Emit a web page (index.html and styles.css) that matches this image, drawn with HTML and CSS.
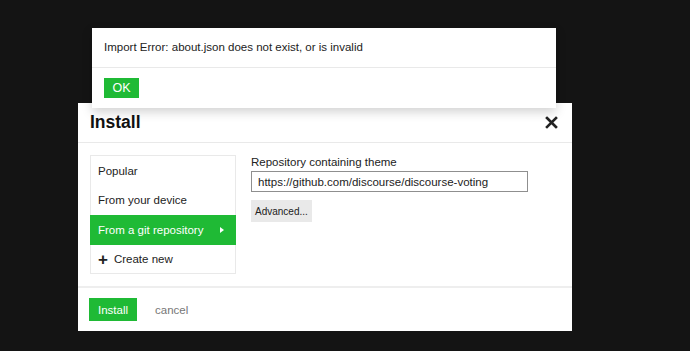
FILE: index.html
```html
<!DOCTYPE html>
<html lang="en">
<head>
    <meta charset="UTF-8">
    <title>Install theme</title>
    <link rel="stylesheet" href="styles.css">
</head>
<body>
    <div class="stage">
        <div class="alert">
            <div class="alert-body">Import Error: about.json does not exist, or is invalid</div>
            <div class="alert-footer">
                <button class="btn-primary btn-ok">OK</button>
            </div>
        </div>

        <div class="modal">
            <div class="modal-header">
                <h3>Install</h3>
                <svg class="close" width="13" height="13" viewBox="0 0 13 13">
                    <path d="M2 2 L11 11 M11 2 L2 11" stroke="#222" stroke-width="2.6" stroke-linecap="square"/>
                </svg>
            </div>
            <div class="modal-body">
                <ul class="install-options">
                    <li>Popular</li>
                    <li>From your device</li>
                    <li class="active">From a git repository <span class="caret"></span></li>
                    <li><span class="plus">+</span> Create new</li>
                </ul>
                <div class="repo-form">
                    <label for="repo-url">Repository containing theme</label>
                    <input type="text" id="repo-url" value="https://github.com/discourse/discourse-voting">
                    <button class="btn-default">Advanced...</button>
                </div>
            </div>
            <div class="modal-footer">
                <button class="btn-primary btn-install">Install</button>
                <a class="cancel" href="#">cancel</a>
            </div>
        </div>
    </div>
</body>
</html>
```

FILE: styles.css
```css
:root {
    --green: #1fba35;
    --text-color: #222;
    --border-color: #e9e9e9;
}

body {
    margin: 0;
    background-color: #141414;
    font-family: 'Liberation Sans', Arial, sans-serif;
    font-size: 11.5px;
    color: var(--text-color);
}

.stage {
    display: flex;
    flex-direction: column;
    padding: 28px 0 0 78px;
}

.alert {
    position: relative;
    z-index: 2;
    width: 464px;
    margin-left: 14px;
    background-color: #fff;
    box-shadow: 0 4px 10px rgba(0,0,0,0.18);
}

.alert-body {
    height: 39px;
    line-height: 39px;
    padding: 0 12px;
    font-size: 11.5px;
    border-bottom: 1px solid var(--border-color);
}

.alert-footer {
    display: flex;
    align-items: center;
    height: 40px;
    padding: 0 12px;
}

button {
    font-family: inherit;
    border: none;
    cursor: pointer;
}

.btn-primary {
    background-color: var(--green);
    color: #fff;
    font-size: 12px;
}

.btn-ok {
    width: 35px;
    height: 20px;
    font-size: 12.5px;
    padding: 0;
}

.modal {
    position: relative;
    z-index: 1;
    width: 494px;
    margin-top: -5px;
    background-color: #fff;
}

.modal-header {
    display: flex;
    justify-content: space-between;
    align-items: center;
    height: 39px;
    padding: 0 14px 0 12px;
    border-bottom: 1px solid var(--border-color);
}

.modal-header h3 {
    margin: 0;
    font-size: 17.5px;
    font-weight: bold;
    color: #111;
}

.close {
    display: block;
}

.modal-body {
    display: flex;
    gap: 15px;
    height: 131px;
    padding: 12px 12px 0;
}

.install-options {
    list-style: none;
    margin: 0;
    padding: 0;
    width: 146px;
    height: 119px;
    box-sizing: border-box;
    border: 1px solid var(--border-color);
}

.install-options li {
    display: flex;
    align-items: center;
    height: 29.5px;
    padding: 0 7px;
}

.install-options li.active {
    margin: 0 -1px;
    padding: 0 12px 0 8px;
    background-color: var(--green);
    color: #fff;
    justify-content: space-between;
}

.caret {
    width: 0;
    height: 0;
    border-top: 3.5px solid transparent;
    border-bottom: 3.5px solid transparent;
    border-left: 4px solid #fff;
}

.plus {
    font-size: 17px;
    font-weight: bold;
    margin-right: 6px;
    line-height: 1;
}

.repo-form {
    display: flex;
    flex-direction: column;
    align-items: flex-start;
    padding-top: 1px;
}

label {
    margin-bottom: 3px;
}

input {
    width: 277px;
    height: 21px;
    box-sizing: border-box;
    padding: 0 6px;
    border: 1px solid #8f8f8f;
    font-family: inherit;
    font-size: 11.5px;
    color: var(--text-color);
}

.btn-default {
    margin-top: 8px;
    height: 22px;
    padding: 0 4px;
    background-color: #e9e9e9;
    color: var(--text-color);
    font-size: 10px;
}

.modal-footer {
    display: flex;
    align-items: center;
    gap: 18px;
    height: 43px;
    padding: 0 11px;
    border-top: 2px solid #eeeeee;
}

.btn-install {
    width: 48px;
    height: 23px;
    padding: 0;
    font-size: 11.5px;
}

.cancel {
    color: #777;
    text-decoration: none;
    font-size: 11.5px;
}
```
